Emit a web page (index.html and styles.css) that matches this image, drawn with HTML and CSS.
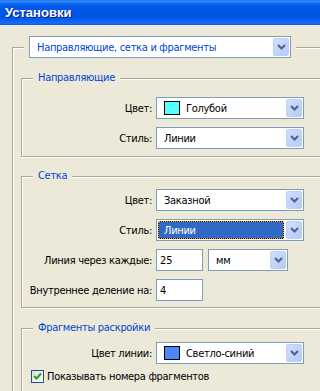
FILE: index.html
```html
<!DOCTYPE html>
<html lang="ru">
<head>
  <meta charset="UTF-8">
  <title>Установки</title>
  <link rel="stylesheet" href="styles.css">
</head>
<body>
  <div class="titlebar">Установки</div>

  <div class="client">
    <fieldset class="group outer">
      <legend class="combo-legend">
        <div class="combo combo-main">
          <div class="combo-value">Направляющие, сетка и фрагменты</div>
          <div class="combo-btn"><svg width="9" height="6" viewBox="0 0 9 6"><polyline points="1,1 4.5,4.5 8,1" /></svg></div>
        </div>
      </legend>

      <fieldset class="group guides">
        <legend>Направляющие</legend>
        <div class="rows">
          <label>Цвет:</label>
          <div class="combo">
            <div class="combo-value"><span class="swatch cyan"></span>Голубой</div>
            <div class="combo-btn"><svg width="9" height="6" viewBox="0 0 9 6"><polyline points="1,1 4.5,4.5 8,1" /></svg></div>
          </div>
          <label>Стиль:</label>
          <div class="combo">
            <div class="combo-value">Линии</div>
            <div class="combo-btn"><svg width="9" height="6" viewBox="0 0 9 6"><polyline points="1,1 4.5,4.5 8,1" /></svg></div>
          </div>
        </div>
      </fieldset>

      <fieldset class="group grid">
        <legend>Сетка</legend>
        <div class="rows">
          <label>Цвет:</label>
          <div class="combo">
            <div class="combo-value">Заказной</div>
            <div class="combo-btn"><svg width="9" height="6" viewBox="0 0 9 6"><polyline points="1,1 4.5,4.5 8,1" /></svg></div>
          </div>
          <label>Стиль:</label>
          <div class="combo focused">
            <div class="combo-value">Линии</div>
            <div class="combo-btn"><svg width="9" height="6" viewBox="0 0 9 6"><polyline points="1,1 4.5,4.5 8,1" /></svg></div>
          </div>
          <label>Линия через каждые:</label>
          <div class="pair">
            <input class="field" type="text" value="25">
            <div class="combo combo-unit">
              <div class="combo-value">мм</div>
              <div class="combo-btn"><svg width="9" height="6" viewBox="0 0 9 6"><polyline points="1,1 4.5,4.5 8,1" /></svg></div>
            </div>
          </div>
          <label>Внутреннее деление на:</label>
          <input class="field" type="text" value="4">
        </div>
      </fieldset>

      <fieldset class="group slices">
        <legend>Фрагменты раскройки</legend>
        <div class="rows">
          <label>Цвет линии:</label>
          <div class="combo">
            <div class="combo-value"><span class="swatch blue"></span>Светло-синий</div>
            <div class="combo-btn"><svg width="9" height="6" viewBox="0 0 9 6"><polyline points="1,1 4.5,4.5 8,1" /></svg></div>
          </div>
          <div class="check-row">
            <span class="checkbox"><svg width="9" height="9" viewBox="0 0 9 9"><polyline points="1,4 3.5,6.5 8,1.5" /></svg></span>
            Показывать номера фрагментов
          </div>
        </div>
      </fieldset>
    </fieldset>
  </div>
</body>
</html>
```

FILE: styles.css
```css
* {
  box-sizing: border-box;
}

body {
  margin: 0;
  width: 320px;
  height: 391px;
  overflow: hidden;
  background: #ece9d8;
  color: #000;
  font-family: "DejaVu Sans Condensed", "Liberation Sans", sans-serif;
  font-size: 11px;
  letter-spacing: -0.3px;
}

.titlebar {
  height: 25px;
  padding: 5px 0 0 5px;
  color: #fff;
  font: bold 13px "Liberation Sans", sans-serif;
  letter-spacing: 0;
  text-shadow: 1px 1px 0 #0a1883;
  background: linear-gradient(to bottom,
    #0a5ef2 0, #3d8ff9 1px, #1270f5 3px, #0258e8 6px,
    #0054e3 16px, #0a5ff0 20px, #1a6cf7 23px, #0a5ae8 25px);
}

.client {
  padding: 11px 0 0 12px;
}

/* etched group boxes */
.group {
  margin: 0;
  padding: 0;
  min-width: 0;
  border: 1px solid #aca899;
  box-shadow: inset 1px 1px 0 #fff, 1px 1px 0 #fff;
}

.group > legend {
  margin-left: 11px;
  padding: 0 5px;
  line-height: 14px;
  color: #0046d5;
  background: #ece9d8;
}

.outer {
  width: 340px;
  padding: 13px 0 0 8px;
  border-bottom: none;
}

.outer > legend.combo-legend {
  margin-left: 3px;
  padding: 0 5px;
  line-height: normal;
}

.group .group {
  width: 320px;
}

.guides {
  padding: 12px 0 7px;
}

.grid {
  margin-top: 12px;
  padding: 6px 0 6px;
}

.slices {
  margin-top: 13px;
  padding: 7px 0 8px;
}

.rows {
  display: grid;
  grid-template-columns: 130px max-content;
  column-gap: 4px;
  row-gap: 8px;
  align-items: center;
}

.rows label {
  text-align: right;
  white-space: nowrap;
}

/* combo boxes */
.combo {
  display: flex;
  align-items: center;
  width: 148px;
  height: 22px;
  padding: 1px;
  border: 1px solid #7f9db9;
  background: #fff;
}

.combo-main {
  width: 262px;
}

.combo-unit {
  width: 80px;
}

.combo-value {
  flex: 1;
  display: flex;
  align-items: center;
  height: 18px;
  margin-right: 2px;
  padding-left: 6px;
  white-space: nowrap;
  overflow: hidden;
}

.combo-btn {
  display: flex;
  align-items: center;
  justify-content: center;
  width: 16px;
  height: 18px;
  border-radius: 2px;
  border: 1px solid #bccdf7;
  background: linear-gradient(to bottom right, #d2defd, #b6c9f7);
}

.combo-btn polyline {
  fill: none;
  stroke: #4d6185;
  stroke-width: 2;
}

.focused .combo-value {
  color: #fff;
  background: #316ac5;
  box-shadow: inset 0 0 0 1px #000;
  outline: 1px dotted #f2b64c;
  outline-offset: -1px;
}

.swatch {
  width: 16px;
  height: 14px;
  margin-right: 6px;
  border: 1px solid #000;
}

.swatch.cyan {
  background: #55ffff;
}

.swatch.blue {
  background: #4d85ff;
}

/* text fields */
.pair {
  display: flex;
  gap: 5px;
}

.field {
  width: 47px;
  height: 22px;
  margin: 0;
  padding: 0 3px;
  border: 1px solid #7f9db9;
  background: #fff;
  font: inherit;
  color: #000;
}

/* checkbox */
.check-row {
  grid-column: 1 / -1;
  display: flex;
  align-items: center;
  gap: 3px;
  margin-top: -2px;
  padding-left: 9px;
  white-space: nowrap;
}

.checkbox {
  display: flex;
  align-items: center;
  justify-content: center;
  width: 13px;
  height: 13px;
  border: 1px solid #1c5180;
  background: linear-gradient(to bottom right, #dcdcd7, #fff);
}

.checkbox polyline {
  fill: none;
  stroke: #21a121;
  stroke-width: 2;
}
```
